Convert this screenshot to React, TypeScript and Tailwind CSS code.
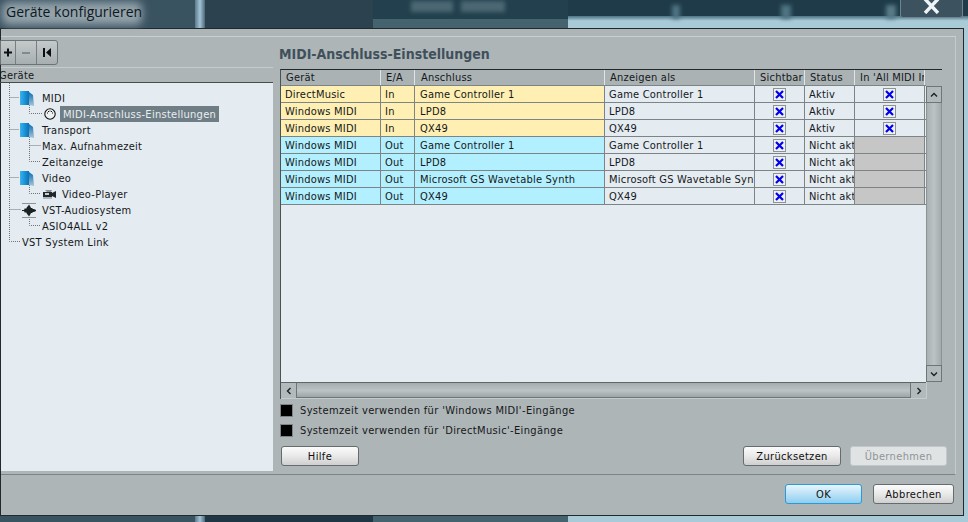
const uiFont = "font-['DejaVu_Sans',sans-serif] [font-stretch:condensed] text-[11px] leading-none";

const columns = ["w-[100px]", "w-[34px]", "w-[190px]", "w-[150px]", "w-[50px]", "w-[50px]", "w-[70px]"];

const rows = [
  { device: "DirectMusic", dir: "In", port: "Game Controller 1", shown: "Game Controller 1", status: "Aktiv", all: true },
  { device: "Windows MIDI", dir: "In", port: "LPD8", shown: "LPD8", status: "Aktiv", all: true },
  { device: "Windows MIDI", dir: "In", port: "QX49", shown: "QX49", status: "Aktiv", all: true },
  { device: "Windows MIDI", dir: "Out", port: "Game Controller 1", shown: "Game Controller 1", status: "Nicht aktiv", all: false },
  { device: "Windows MIDI", dir: "Out", port: "LPD8", shown: "LPD8", status: "Nicht aktiv", all: false },
  { device: "Windows MIDI", dir: "Out", port: "Microsoft GS Wavetable Synth", shown: "Microsoft GS Wavetable Synth", status: "Nicht aktiv", all: false },
  { device: "Windows MIDI", dir: "Out", port: "QX49", shown: "QX49", status: "Nicht aktiv", all: false },
];

const headers = ["Gerät", "E/A", "Anschluss", "Anzeigen als", "Sichtbar", "Status", "In 'All MIDI In'"];

const Check = () => (
  <div className="flex h-[13px] w-[13px] items-center justify-center border border-[#8d9294] bg-[#eef1f4]">
    <svg width="9" height="9" viewBox="0 0 9 9">
      <path d="M1 1 L8 8 M8 1 L1 8" stroke="#0000ee" strokeWidth="2.2" />
    </svg>
  </div>
);

const Folder = () => (
  <svg width="14" height="17" viewBox="0 0 14 17" className="shrink-0">
    <defs>
      <linearGradient id="fold" x1="0" y1="0" x2="1" y2="0">
        <stop offset="0" stopColor="#38b4ee" />
        <stop offset="1" stopColor="#0673bd" />
      </linearGradient>
      <linearGradient id="foldSide" x1="0" y1="0" x2="0" y2="1">
        <stop offset="0" stopColor="#0a6fb4" />
        <stop offset="1" stopColor="#a9c3d2" />
      </linearGradient>
    </defs>
    <path d="M9 2 L13 5 L14 16 L9 15 Z" fill="url(#foldSide)" />
    <path d="M0 1 H9 V15 H0 Z" fill="url(#fold)" />
  </svg>
);

const MidiIcon = () => (
  <svg width="12" height="12" viewBox="0 0 12 12" className="shrink-0">
    <circle cx="6" cy="6" r="5.2" fill="#eef1f4" stroke="#111" strokeWidth="1.1" />
    <path d="M3 5 h1 M8 5 h1 M4 3.5 h1 M7 3.5 h1 M5.5 3 h1" stroke="#111" strokeWidth="1" />
  </svg>
);

const CameraIcon = () => (
  <svg width="14" height="9" viewBox="0 0 14 9" className="shrink-0">
    <path d="M0 0 H3 L5 2 H9 L10 0 H7 Z" fill="#8b9092" />
    <rect x="1" y="2" width="9" height="5" fill="#22272a" />
    <rect x="3" y="3" width="4" height="2" fill="#c8cfd3" />
    <path d="M10 3 L14 1 V8 L10 6 Z" fill="#22272a" />
    <path d="M1 8 H10" stroke="#7b8184" />
  </svg>
);

const AudioIcon = () => (
  <svg width="14" height="15" viewBox="0 0 14 15" className="shrink-0">
    <path d="M0 .5 H14 M0 14.5 H14" stroke="#8e9496" />
    <path
      d="M0 7 H2 L3 5 L4 6 L5 4 L6 3 L7 1.5 L8 3 L9 5 L10 5 L11 6 L12 6 L14 7 V8 L12 9 L11 9 L10 10 L9 10 L8 12 L7 13.5 L6 12 L5 11 L4 9 L3 10 L2 8 H0 Z"
      fill="#1c2123"
    />
  </svg>
);

const TreeRow = ({ indent, icon, label, selected, gap = "ml-[6px]" }: { indent: string; icon?: React.ReactNode; label: string; selected?: boolean; gap?: string }) => (
  <div className={`flex h-4 items-center ${indent}`}>
    {icon}
    {selected ? (
      <span className="ml-1 flex h-4 items-center bg-[#6f7d85] px-[3px] text-[#e8eef2]">{label}</span>
    ) : (
      <span className={icon ? gap : ""}>{label}</span>
    )}
  </div>
);

const Btn = ({ label, width, kind }: { label: string; width: string; kind?: "default" | "disabled" }) => {
  const skin =
    kind === "default"
      ? "border-[#2b9ad4] bg-gradient-to-b from-[#e6f6fd] to-[#8ecdf0] text-[#101010]"
      : kind === "disabled"
        ? "border-[#c3c9ca] bg-[#e0e3e4] text-[#8f9596]"
        : "border-[#666c6e] bg-gradient-to-b from-[#fbfbfb] via-[#e9e9e9] to-[#cfcfcf] text-[#101010]";
  return (
    <div className={`flex h-5 items-center justify-center rounded-[3px] border tracking-[0.35px] ${skin} ${width}`}>{label}</div>
  );
};

const ScrollBtn = ({ d, cls }: { d: string; cls: string }) => (
  <div className={`flex shrink-0 items-center justify-center border border-[#6f7678] bg-[#b3babc] ${cls}`}>
    <svg width="10" height="10" viewBox="0 0 10 10">
      <path d={d} fill="none" stroke="#1c2022" strokeWidth="1.4" />
    </svg>
  </div>
);

export default function App() {
  return (
    <div className={`flex h-[522px] w-[968px] flex-col overflow-hidden bg-[#a9cbd8] text-[#15181a] ${uiFont}`}>
      {/* blurred desktop behind the glass title bar */}
      <div className="relative flex h-7 shrink-0">
        <div className="w-[195px] bg-[#3a5361]" />
        <div className="w-[10px] bg-gradient-to-r from-[#5c7c8e] via-[#a4c3d6] to-[#4d6a7a]" />
        <div className="w-[168px] bg-[#2c434f]" />
        <div className="flex w-[195px] flex-col">
          <div className="h-[19px] bg-[#22404e]" />
          <div className="flex-1 bg-[#45626f]" />
        </div>
        <div className="flex flex-1 flex-col">
          <div className="h-[16px] bg-[#1f3b49]" />
          <div className="flex-1 bg-gradient-to-b from-[#4d7383] to-[#a9cbd8] to-40%" />
        </div>
        <div className="absolute left-[2px] top-[2px] h-[23px] w-[140px] rounded-md bg-[#93a3ab] blur-[4px]" />
        <div className="absolute left-[411px] top-[1px] flex gap-[8px] blur-[2px]">
          <div className="h-[11px] w-[42px] bg-[#4c6773]" />
          <div className="h-[11px] w-[44px] bg-[#4c6773]" />
        </div>
        <div className="absolute left-[672px] top-[5px] h-[14px] w-[8px] bg-[#4f7483] blur-[2px]" />
        <div className="absolute left-[781px] top-[5px] h-[14px] w-[10px] bg-[#4f7483] blur-[2px]" />
        <div className="absolute left-[886px] top-[5px] h-[14px] w-[10px] bg-[#587b89] blur-[2px]" />
        <div className="absolute left-[6px] top-[3px] font-['Open_Sans',sans-serif] text-[14px] leading-[18px] [font-stretch:normal] text-[#10181d]">
          Geräte konfigurieren
        </div>
        <div className="absolute left-[900px] top-0 flex h-[18px] w-[63px] items-start justify-center rounded-b-[3px] border border-t-0 border-[#6f8490] bg-[#3c525e]">
          <svg width="17" height="14" viewBox="0 0 17 14">
            <path d="M2 -1 L15 13 M15 -1 L2 13" stroke="#eef3f5" strokeWidth="3.4" />
          </svg>
        </div>
      </div>

      <div className="flex h-[488px] w-[964px] shrink-0 flex-col border border-[#20292d] bg-[#aeb5b7]">
        <div className="mt-[7px] flex h-[439px] w-[955px] shrink-0 border-b border-r border-t border-b-[#7c8486] border-r-[#c4cbcc] border-t-[#c9d0d1]">
          {/* device tree */}
          <div className="flex h-full w-[272px] shrink-0 flex-col">
            <div className="flex h-[31px] shrink-0 border-b border-[#c5cccd] pt-[3px]">
              <div className="-ml-px flex h-[25px] w-[58px] items-center rounded-r-[3px] border border-[#6d7476] bg-gradient-to-b from-[#c4caca] to-[#a8afb1]">
                <div className="flex h-full w-[15px] items-center justify-center border-r border-[#777e80]">
                  <svg width="9" height="9" viewBox="0 0 9 9"><path d="M0 4.5 H8 M4 .5 V8.5" stroke="#0c0f10" strokeWidth="2" /></svg>
                </div>
                <div className="flex h-full w-[21px] items-center justify-center border-r border-[#777e80]">
                  <div className="h-[2px] w-2 bg-[#838a8c]" />
                </div>
                <div className="flex flex-1 items-center justify-center">
                  <svg width="9" height="9" viewBox="0 0 9 9"><path d="M1 0 V9" stroke="#0c0f10" strokeWidth="2" /><path d="M8 0 V9 L3 4.5 Z" fill="#0c0f10" /></svg>
                </div>
              </div>
            </div>
            <div className="flex h-[15px] shrink-0 items-center border-b border-[#454d50] -ml-[2px] tracking-[0.25px]">Geräte</div>
            <div className="relative h-[388px] shrink-0 bg-[#e4ebf1] pt-[7px] tracking-[0.28px]">
              <svg className="absolute left-0 top-0" width="60" height="170">
                <path
                  d="M8.5 0 V158.5 H20 M8.5 14.5 H18 M8.5 46.5 H18 M8.5 94.5 H18 M8.5 126.5 H20 M28.5 22 V30.5 H42 M28.5 54 V78.5 H40 M28.5 62.5 H40 M28.5 102 V110.5 H40 M28.5 134 V142.5 H40"
                  fill="none"
                  stroke="#6e7578"
                  strokeDasharray="1 1"
                />
              </svg>
              <div className="relative">
                <TreeRow indent="pl-[19px]" icon={<Folder />} label="MIDI" gap="ml-[8px]" />
                <TreeRow indent="pl-[43px]" icon={<MidiIcon />} label="MIDI-Anschluss-Einstellungen" selected />
                <TreeRow indent="pl-[19px]" icon={<Folder />} label="Transport" gap="ml-[8px]" />
                <TreeRow indent="pl-[41px]" label="Max. Aufnahmezeit" />
                <TreeRow indent="pl-[41px]" label="Zeitanzeige" />
                <TreeRow indent="pl-[19px]" icon={<Folder />} label="Video" gap="ml-[8px]" />
                <TreeRow indent="pl-[41px]" icon={<CameraIcon />} label="Video-Player" />
                <TreeRow indent="pl-[21px]" icon={<AudioIcon />} label="VST-Audiosystem" />
                <TreeRow indent="pl-[41px]" label="ASIO4ALL v2" />
                <TreeRow indent="pl-[21px]" label="VST System Link" />
              </div>
            </div>
          </div>

          {/* port table */}
          <div className="flex min-w-0 flex-1 flex-col pl-[7px]">
            <div className="flex h-8 shrink-0 items-center pt-[1px] text-[14px] font-bold text-[#3f505b] -ml-px">
              MIDI-Anschluss-Einstellungen
            </div>
            <div className="flex h-[330px] w-[662px] shrink-0 flex-col border-l border-t border-l-[#4b5254] border-t-[#23292b] tracking-[0.22px]">
              <div className="flex min-h-0 flex-1">
                <div className="flex w-[645px] shrink-0 flex-col bg-[#e4ebf1]">
                  <div className="flex h-4 shrink-0 border-b border-[#7c8486] bg-[#aab2b4]">
                    {headers.map((h, i) => (
                      <div
                        key={h}
                        className={`flex items-center overflow-hidden whitespace-nowrap border-r border-[#dfe4e5] ${columns[i]} ${i === 2 ? "pl-[6px]" : "pl-[5px]"} ${i === 6 ? "pr-[6px]" : "pr-[1px]"}`}
                      >
                        {h}
                      </div>
                    ))}
                  </div>
                  {rows.map((r, idx) => {
                    const tint = r.dir === "In" ? "bg-[#ffefb2]" : "bg-[#b3f0ff]";
                    const cell = "flex items-center overflow-hidden whitespace-nowrap border-r border-[#7c8486] pl-1";
                    return (
                      <div key={idx} className="flex h-[17px] shrink-0 border-b border-[#7c8486]">
                        <div className={`${cell} ${columns[0]} ${tint}`}>{r.device}</div>
                        <div className={`${cell} ${columns[1]} ${tint}`}>{r.dir}</div>
                        <div className={`${cell} ${columns[2]} ${tint} pl-[5px]`}>{r.port}</div>
                        <div className={`${cell} ${columns[3]}`}>{r.shown}</div>
                        <div className={`flex items-center justify-center border-r border-[#7c8486] ${columns[4]}`}><Check /></div>
                        <div className={`${cell} ${columns[5]}`}>{r.status}</div>
                        <div className={`flex items-center justify-center border-r border-[#7c8486] ${columns[6]} ${r.all ? "" : "bg-[#c6c6c6]"}`}>
                          {r.all && <Check />}
                        </div>
                      </div>
                    );
                  })}
                </div>
                <div className="flex w-[16px] shrink-0 flex-col">
                  <div className="h-4 shrink-0 bg-[#aeb5b7]" />
                  <ScrollBtn cls="h-[17px]" d="M2 6.5 L5 3.5 L8 6.5" />
                  <div className="flex-1 border-x border-[#8c9395] bg-gradient-to-r from-[#a9b0b2] via-[#bcc3c5] to-[#a4abad]" />
                  <ScrollBtn cls="h-[17px]" d="M2 3.5 L5 6.5 L8 3.5" />
                </div>
              </div>
              <div className="flex h-[17px] w-[646px] shrink-0 border-b border-r border-[#c5cccd]">
                <div className="flex w-[645px] shrink-0 border-t border-[#5f6668] bg-gradient-to-b from-[#a6adaf] via-[#bcc3c5] to-[#9aa1a3]">
                  <ScrollBtn cls="w-4 border-y-0 border-l-0" d="M6.5 2 L3.5 5 L6.5 8" />
                  <div className="flex-1 border-b border-[#6f7678]" />
                  <ScrollBtn cls="w-4 border-y-0 border-r-0" d="M3.5 2 L6.5 5 L3.5 8" />
                </div>
              </div>
            </div>

            <div className="mt-[5px] flex h-[13px] items-center gap-[7px] tracking-[0.36px]">
              <div className="h-[13px] w-[13px] border border-[#7e8486] bg-black" />
              <span>Systemzeit verwenden für 'Windows MIDI'-Eingänge</span>
            </div>
            <div className="mt-[7px] flex h-[13px] items-center gap-[7px] tracking-[0.36px]">
              <div className="h-[13px] w-[13px] border border-[#7e8486] bg-black" />
              <span>Systemzeit verwenden für 'DirectMusic'-Eingänge</span>
            </div>
            <div className="mt-[9px] flex items-center pl-px pr-[8px]">
              <Btn label="Hilfe" width="w-[78px]" />
              <div className="flex-1" />
              <Btn label="Zurücksetzen" width="w-[98px]" />
              <div className="w-[9px]" />
              <Btn label="Übernehmen" width="w-[97px]" kind="disabled" />
            </div>
          </div>
        </div>

        <div className="flex justify-end gap-[11px] pr-[9px] pt-[9px]">
          <Btn label="OK" width="w-[77px]" kind="default" />
          <Btn label="Abbrechen" width="w-[81px]" />
        </div>
      </div>

      <div className="flex min-h-0 flex-1">
        <div className="w-[195px] bg-[#3a5361]" />
        <div className="w-[10px] bg-gradient-to-r from-[#5c7c8e] via-[#a4c3d6] to-[#4d6a7a]" />
        <div className="w-[168px] bg-[#1f3744]" />
        <div className="w-[195px] bg-[#45626f]" />
        <div className="flex-1 bg-[#a9cbd8]" />
      </div>
    </div>
  );
}
